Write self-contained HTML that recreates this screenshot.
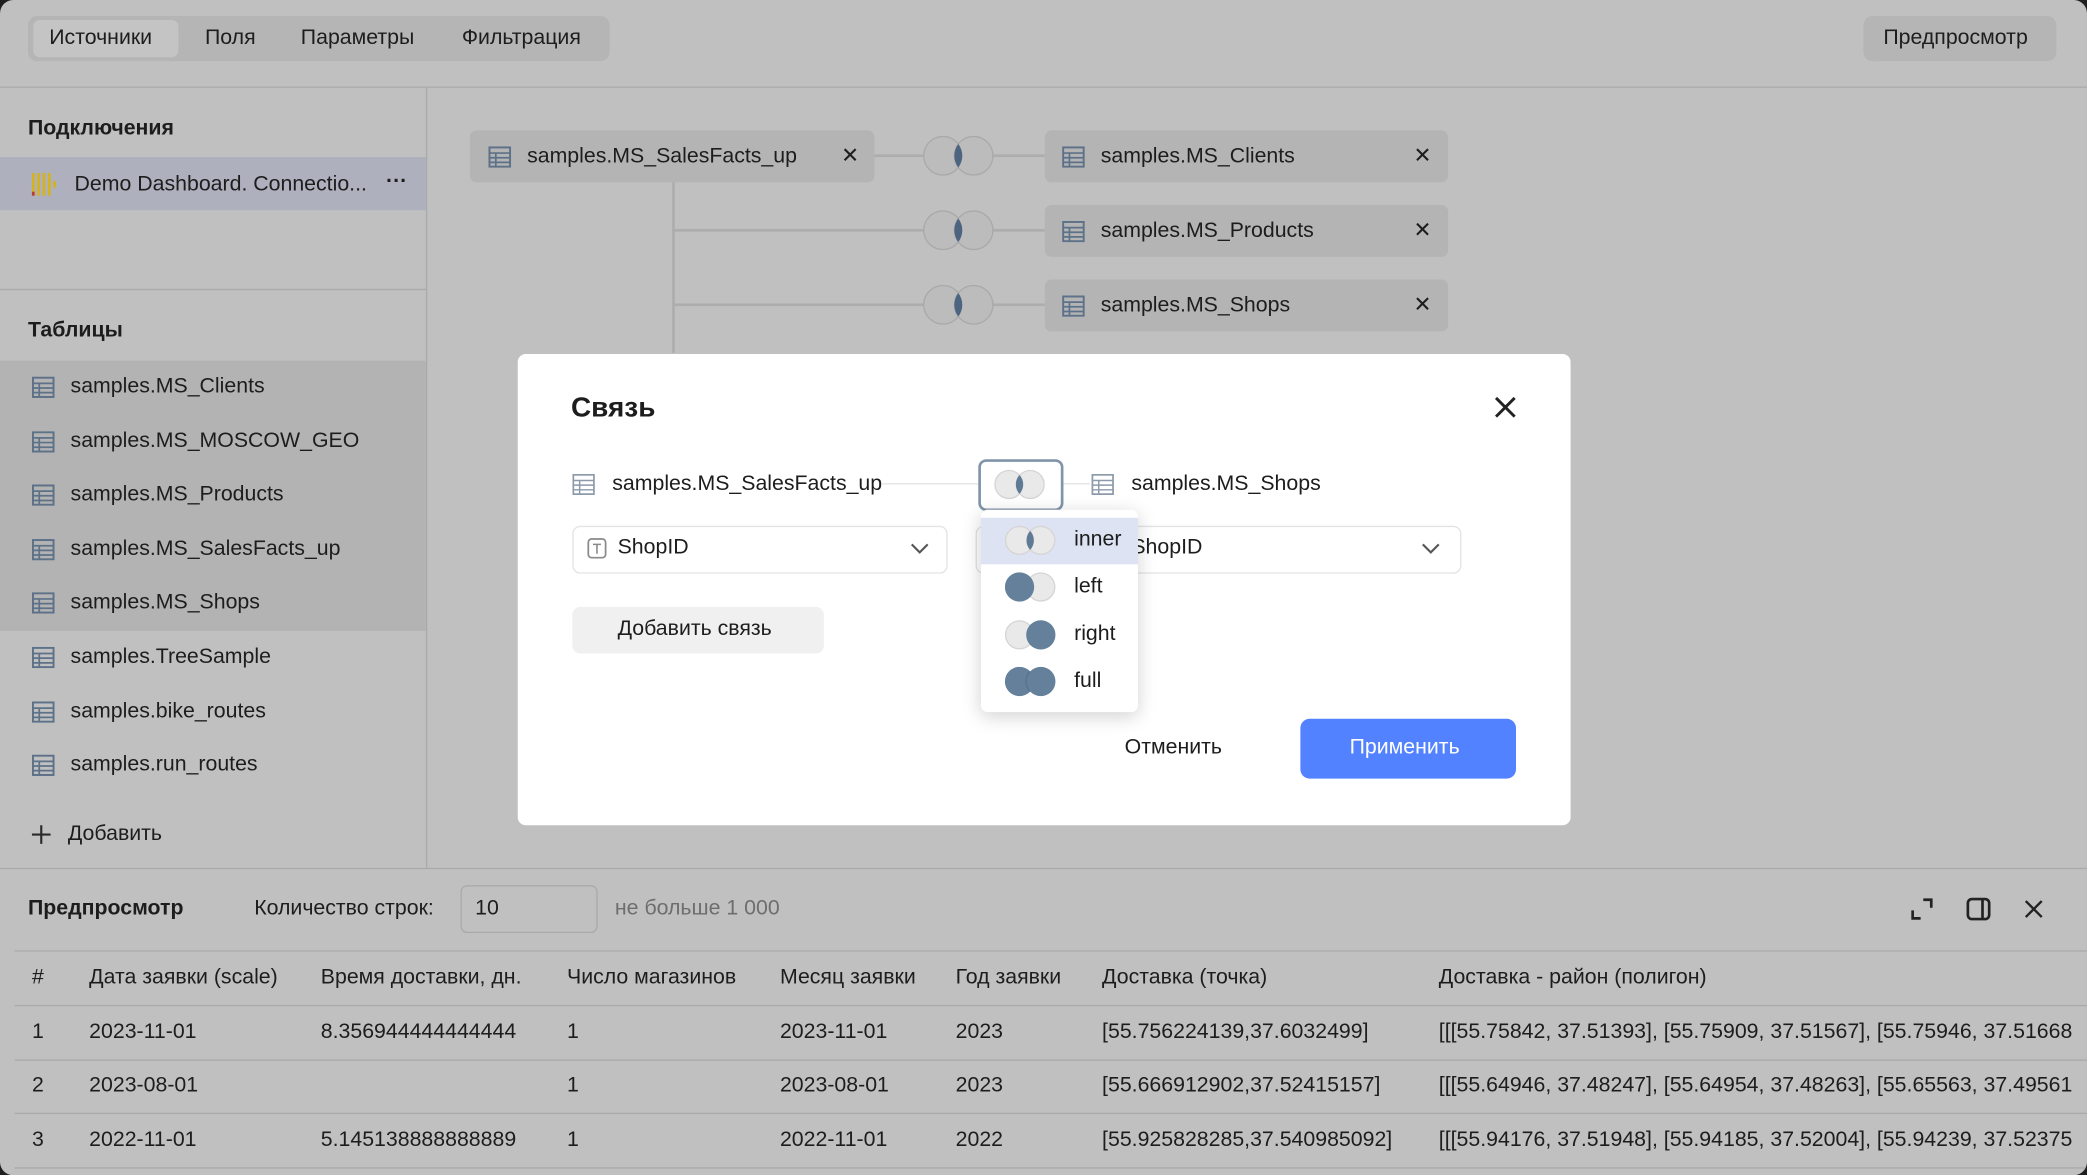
<!DOCTYPE html>
<html><head><meta charset="utf-8"><style>
html,body{margin:0;padding:0;background:#1f1f1f;}
body{width:2087px;height:1175px;overflow:hidden;position:relative;}
#w{position:absolute;left:0;top:0;width:1568px;height:883px;transform:scale(1.33099);transform-origin:0 0;background:#c0c0c0;border-radius:10px;overflow:hidden;font-family:"Liberation Sans",sans-serif;font-size:16px;color:#1d1d1d;}
.a{position:absolute;}
.t{position:absolute;white-space:nowrap;line-height:20px;}
.ti{position:absolute;width:17px;height:16px}
.row{position:absolute;left:0;width:320px;height:40px}
.node{position:absolute;background:#b4b4b4;border-radius:5px;height:39px}
.line{position:absolute;background:#adadad}
.mline{position:absolute;background:#e3e3e3}
</style></head><body><div id="w">
<div class="a" style="left:21px;top:12px;width:437px;height:34px;background:#b5b5b5;border-radius:7px"></div>
<div class="a" style="left:25px;top:15px;width:109px;height:28px;background:#c4c4c4;border-radius:5px"></div>
<div class="t" style="left:37px;top:19px">Источники</div>
<div class="t" style="left:154px;top:19px">Поля</div>
<div class="t" style="left:226px;top:19px">Параметры</div>
<div class="t" style="left:347px;top:19px">Фильтрация</div>
<div class="a" style="left:1400px;top:12px;width:145px;height:34px;background:#b5b5b5;border-radius:7px"></div>
<div class="t" style="left:1415px;top:19px">Предпросмотр</div>
<div class="a" style="left:0;top:65px;width:1568px;height:1px;background:#aaa"></div>
<div class="a" style="left:320px;top:66px;width:1px;height:586px;background:#aaa"></div>
<div class="t" style="left:21px;top:87px;font-weight:bold">Подключения</div>
<div class="row" style="top:118px;background:#aeb0bd"></div>
<svg class="a" style="left:23px;top:129px" width="22" height="20"><rect x="1" y="1" width="2" height="17" fill="#d6b31a"/><rect x="5" y="1" width="2" height="17" fill="#d6b31a"/><rect x="9" y="1" width="2" height="17" fill="#d6b31a"/><rect x="13" y="1" width="2" height="17" fill="#d6b31a"/><rect x="17" y="7" width="2" height="5" fill="#d6b31a"/><rect x="1" y="15" width="2" height="3" fill="#c0392b"/></svg>
<div class="t" style="left:56px;top:129px">Demo Dashboard. Connectio...</div>
<div class="t" style="left:290px;top:127px;font-weight:bold">···</div>
<div class="a" style="left:0;top:217px;width:320px;height:1px;background:#aaa"></div>
<div class="t" style="left:21px;top:239px;font-weight:bold">Таблицы</div>
<div class="a" style="left:0;top:271px;width:320px;height:203px;background:#b3b3b3"></div>
<svg width="0" height="0" style="position:absolute"><defs><symbol id="tb" viewBox="0 0 17 16"><rect x="0.75" y="0.75" width="15.5" height="14.5" fill="none" stroke="#5d7188" stroke-width="1.5"/><path d="M1 5h15M1 8.5h15M1 12h15M5.5 5v10" stroke="#5d7188" stroke-width="1.3"/></symbol>
<symbol id="tbl" viewBox="0 0 17 16"><rect x="0.75" y="0.75" width="15.5" height="14.5" fill="none" stroke="#8c9aaa" stroke-width="1.3"/><path d="M1 5h15M1 8.5h15M1 12h15M5.5 5v10" stroke="#8c9aaa" stroke-width="1.1"/></symbol>
<symbol id="vc" viewBox="0 0 54 30"><circle cx="15.5" cy="15" r="14.5" fill="#bcbcbc" stroke="#a9a9a9"/><circle cx="38.5" cy="15" r="14.5" fill="#bcbcbc" stroke="#a9a9a9"/><path d="M27 6.17A14.5 14.5 0 0 1 27 23.83A14.5 14.5 0 0 1 27 6.17Z" fill="#4c6480"/></symbol>
<symbol id="vi" viewBox="0 0 38 24"><circle cx="11" cy="12" r="10.5" fill="#e9e9e9" stroke="#d5d5d5"/><circle cx="27" cy="12" r="10.5" fill="#e9e9e9" stroke="#d5d5d5"/><path d="M19 4.9A10.5 10.5 0 0 1 19 19.1A10.5 10.5 0 0 1 19 4.9Z" fill="#5f7a94"/></symbol>
<symbol id="vl" viewBox="0 0 38 24"><circle cx="27" cy="12" r="10.5" fill="#e9e9e9" stroke="#d5d5d5"/><circle cx="11" cy="12" r="11" fill="#64809b"/></symbol>
<symbol id="vr" viewBox="0 0 38 24"><circle cx="11" cy="12" r="10.5" fill="#e9e9e9" stroke="#d5d5d5"/><circle cx="27" cy="12" r="11" fill="#64809b"/></symbol>
<symbol id="vf" viewBox="0 0 38 24"><circle cx="11" cy="12" r="11" fill="#64809b"/><circle cx="27" cy="12" r="11" fill="#64809b"/><path d="M19 4.5A10.5 10.5 0 0 0 19 19.5" fill="none" stroke="#577290"/></symbol>
</defs></svg>
<svg class="ti" style="left:24px;top:283px"><use href="#tb"/></svg><div class="t" style="left:53px;top:281px">samples.MS_Clients</div>
<svg class="ti" style="left:24px;top:324px"><use href="#tb"/></svg><div class="t" style="left:53px;top:322px">samples.MS_MOSCOW_GEO</div>
<svg class="ti" style="left:24px;top:364px"><use href="#tb"/></svg><div class="t" style="left:53px;top:362px">samples.MS_Products</div>
<svg class="ti" style="left:24px;top:405px"><use href="#tb"/></svg><div class="t" style="left:53px;top:403px">samples.MS_SalesFacts_up</div>
<svg class="ti" style="left:24px;top:445px"><use href="#tb"/></svg><div class="t" style="left:53px;top:443px">samples.MS_Shops</div>
<svg class="ti" style="left:24px;top:486px"><use href="#tb"/></svg><div class="t" style="left:53px;top:484px">samples.TreeSample</div>
<svg class="ti" style="left:24px;top:527px"><use href="#tb"/></svg><div class="t" style="left:53px;top:525px">samples.bike_routes</div>
<svg class="ti" style="left:24px;top:567px"><use href="#tb"/></svg><div class="t" style="left:53px;top:565px">samples.run_routes</div>
<svg class="a" style="left:23px;top:619px" width="16" height="16"><path d="M8 1v14M1 8h14" stroke="#2a2a2a" stroke-width="1.6"/></svg>
<div class="t" style="left:51px;top:617px">Добавить</div>
<div class="line" style="left:505px;top:137px;width:2px;height:128px"></div>
<div class="line" style="left:657px;top:116px;width:40px;height:2px"></div>
<div class="line" style="left:505px;top:172px;width:192px;height:2px"></div>
<div class="line" style="left:505px;top:228px;width:192px;height:2px"></div>
<div class="line" style="left:745px;top:116px;width:40px;height:2px"></div>
<div class="line" style="left:745px;top:172px;width:40px;height:2px"></div>
<div class="line" style="left:745px;top:228px;width:40px;height:2px"></div>
<div class="node" style="left:353px;top:98px;width:304px"></div>
<svg class="ti" style="left:367px;top:110px"><use href="#tb"/></svg><div class="t" style="left:396px;top:108px">samples.MS_SalesFacts_up</div><div class="t" style="left:632px;top:108px">✕</div>
<svg class="a" style="left:693px;top:102px" width="54" height="30"><use href="#vc"/></svg>
<svg class="a" style="left:693px;top:158px" width="54" height="30"><use href="#vc"/></svg>
<svg class="a" style="left:693px;top:214px" width="54" height="30"><use href="#vc"/></svg>
<div class="node" style="left:785px;top:98px;width:303px"></div>
<svg class="ti" style="left:798px;top:110px"><use href="#tb"/></svg><div class="t" style="left:827px;top:108px">samples.MS_Clients</div><div class="t" style="left:1062px;top:108px">✕</div>
<div class="node" style="left:785px;top:154px;width:303px"></div>
<svg class="ti" style="left:798px;top:166px"><use href="#tb"/></svg><div class="t" style="left:827px;top:164px">samples.MS_Products</div><div class="t" style="left:1062px;top:164px">✕</div>
<div class="node" style="left:785px;top:210px;width:303px"></div>
<svg class="ti" style="left:798px;top:222px"><use href="#tb"/></svg><div class="t" style="left:827px;top:220px">samples.MS_Shops</div><div class="t" style="left:1062px;top:220px">✕</div>
<div class="a" style="left:0;top:652px;width:1568px;height:1px;background:#aaa"></div>
<div class="t" style="left:21px;top:673px;font-weight:bold">Предпросмотр</div>
<div class="t" style="left:191px;top:673px">Количество строк:</div>
<div class="a" style="left:346px;top:665px;width:101px;height:34px;border:1px solid #aaa;border-radius:5px"></div>
<div class="t" style="left:357px;top:673px">10</div>
<div class="t" style="left:462px;top:673px;color:#6e6e6e">не больше 1 000</div>
<svg class="a" style="left:1435px;top:674px" width="18" height="18"><path d="M10 2h6v6M2 10v6h6" fill="none" stroke="#222" stroke-width="2"/></svg>
<svg class="a" style="left:1477px;top:674px" width="20" height="18"><rect x="1.5" y="1.5" width="16" height="15" rx="3" fill="none" stroke="#222" stroke-width="2"/><path d="M12.5 2v14" stroke="#222" stroke-width="2"/></svg>
<svg class="a" style="left:1520px;top:675px" width="16" height="16"><path d="M2 2l12 12M14 2L2 14" stroke="#222" stroke-width="1.8"/></svg>
<div class="a" style="left:11px;top:714px;width:1557px;height:1px;background:#aaa"></div>
<div class="a" style="left:11px;top:755px;width:1557px;height:1px;background:#aaa"></div>
<div class="a" style="left:11px;top:796px;width:1557px;height:1px;background:#aaa"></div>
<div class="a" style="left:11px;top:836px;width:1557px;height:1px;background:#aaa"></div>
<div class="a" style="left:11px;top:877px;width:1557px;height:1px;background:#aaa"></div>
<div class="t" style="left:24px;top:725px">#</div>
<div class="t" style="left:67px;top:725px">Дата заявки (scale)</div>
<div class="t" style="left:241px;top:725px">Время доставки, дн.</div>
<div class="t" style="left:426px;top:725px">Число магазинов</div>
<div class="t" style="left:586px;top:725px">Месяц заявки</div>
<div class="t" style="left:718px;top:725px">Год заявки</div>
<div class="t" style="left:828px;top:725px">Доставка (точка)</div>
<div class="t" style="left:1081px;top:725px">Доставка - район (полигон)</div>
<div class="t" style="left:24px;top:766px">1</div><div class="t" style="left:67px;top:766px">2023-11-01</div><div class="t" style="left:241px;top:766px">8.356944444444444</div><div class="t" style="left:426px;top:766px">1</div><div class="t" style="left:586px;top:766px">2023-11-01</div><div class="t" style="left:718px;top:766px">2023</div><div class="t" style="left:828px;top:766px">[55.756224139,37.6032499]</div><div class="t" style="left:1081px;top:766px">[[[55.75842, 37.51393], [55.75909, 37.51567], [55.75946, 37.51668</div>
<div class="t" style="left:24px;top:806px">2</div><div class="t" style="left:67px;top:806px">2023-08-01</div><div class="t" style="left:426px;top:806px">1</div><div class="t" style="left:586px;top:806px">2023-08-01</div><div class="t" style="left:718px;top:806px">2023</div><div class="t" style="left:828px;top:806px">[55.666912902,37.52415157]</div><div class="t" style="left:1081px;top:806px">[[[55.64946, 37.48247], [55.64954, 37.48263], [55.65563, 37.49561</div>
<div class="t" style="left:24px;top:847px">3</div><div class="t" style="left:67px;top:847px">2022-11-01</div><div class="t" style="left:241px;top:847px">5.145138888888889</div><div class="t" style="left:426px;top:847px">1</div><div class="t" style="left:586px;top:847px">2022-11-01</div><div class="t" style="left:718px;top:847px">2022</div><div class="t" style="left:828px;top:847px">[55.925828285,37.540985092]</div><div class="t" style="left:1081px;top:847px">[[[55.94176, 37.51948], [55.94185, 37.52004], [55.94239, 37.52375</div>
<div class="a" style="left:389px;top:266px;width:791px;height:354px;background:#fff;border-radius:6px"></div>
<div class="t" style="left:429px;top:295px;font-size:21px;line-height:24px;font-weight:bold">Связь</div>
<svg class="a" style="left:1122px;top:297px" width="18" height="18"><path d="M2 2l14 14M16 2L2 16" stroke="#222" stroke-width="2.2"/></svg>
<svg class="ti" style="left:430px;top:356px"><use href="#tbl"/></svg>
<div class="t" style="left:460px;top:354px">samples.MS_SalesFacts_up</div>
<div class="mline" style="left:662px;top:363px;width:73px;height:1px"></div>
<div class="mline" style="left:799px;top:363px;width:20px;height:1px"></div>
<div class="a" style="left:735px;top:345px;width:60px;height:35px;border:2px solid #8094aa;border-radius:6px;background:#fff"></div>
<svg class="a" style="left:747px;top:352px" width="38" height="24"><use href="#vi"/></svg>
<svg class="ti" style="left:820px;top:356px"><use href="#tbl"/></svg>
<div class="t" style="left:850px;top:354px">samples.MS_Shops</div>
<div class="a" style="left:430px;top:395px;width:280px;height:34px;border:1px solid #e3e3e3;border-radius:6px"></div>
<svg class="a" style="left:441px;top:404px" width="16" height="16"><rect x="1" y="1" width="13" height="14" rx="2.5" fill="none" stroke="#8a8a8a" stroke-width="1.3"/><path d="M4.5 5h6M7.5 5v7" stroke="#8a8a8a" stroke-width="1.2"/></svg>
<div class="t" style="left:464px;top:402px">ShopID</div>
<svg class="a" style="left:683px;top:406px" width="16" height="12"><path d="M2 3l6 6 6-6" fill="none" stroke="#555" stroke-width="1.6"/></svg>
<div class="a" style="left:733px;top:395px;width:363px;height:34px;border:1px solid #e3e3e3;border-radius:6px"></div>
<div class="t" style="left:850px;top:402px">ShopID</div>
<svg class="a" style="left:1067px;top:406px" width="16" height="12"><path d="M2 3l6 6 6-6" fill="none" stroke="#555" stroke-width="1.6"/></svg>
<div class="a" style="left:430px;top:456px;width:189px;height:35px;background:#f0f0f0;border-radius:6px"></div>
<div class="t" style="left:464px;top:463px">Добавить связь</div>
<div class="t" style="left:845px;top:552px">Отменить</div>
<div class="a" style="left:977px;top:540px;width:162px;height:45px;background:#5282ff;border-radius:7px"></div>
<div class="t" style="left:1014px;top:552px;color:#fff">Применить</div>
<div class="a" style="left:737px;top:383px;width:118px;height:152px;background:#fff;border-radius:5px;box-shadow:0 3px 14px rgba(0,0,0,.18)"></div>
<div class="a" style="left:737px;top:389px;width:118px;height:35px;background:#dde3f3"></div>
<svg class="a" style="left:755px;top:394px" width="38" height="24"><use href="#vi"/></svg><div class="t" style="left:807px;top:396px">inner</div>
<svg class="a" style="left:755px;top:429px" width="38" height="24"><use href="#vl"/></svg><div class="t" style="left:807px;top:431px">left</div>
<svg class="a" style="left:755px;top:465px" width="38" height="24"><use href="#vr"/></svg><div class="t" style="left:807px;top:467px">right</div>
<svg class="a" style="left:755px;top:500px" width="38" height="24"><use href="#vf"/></svg><div class="t" style="left:807px;top:502px">full</div>
</div></body></html>
